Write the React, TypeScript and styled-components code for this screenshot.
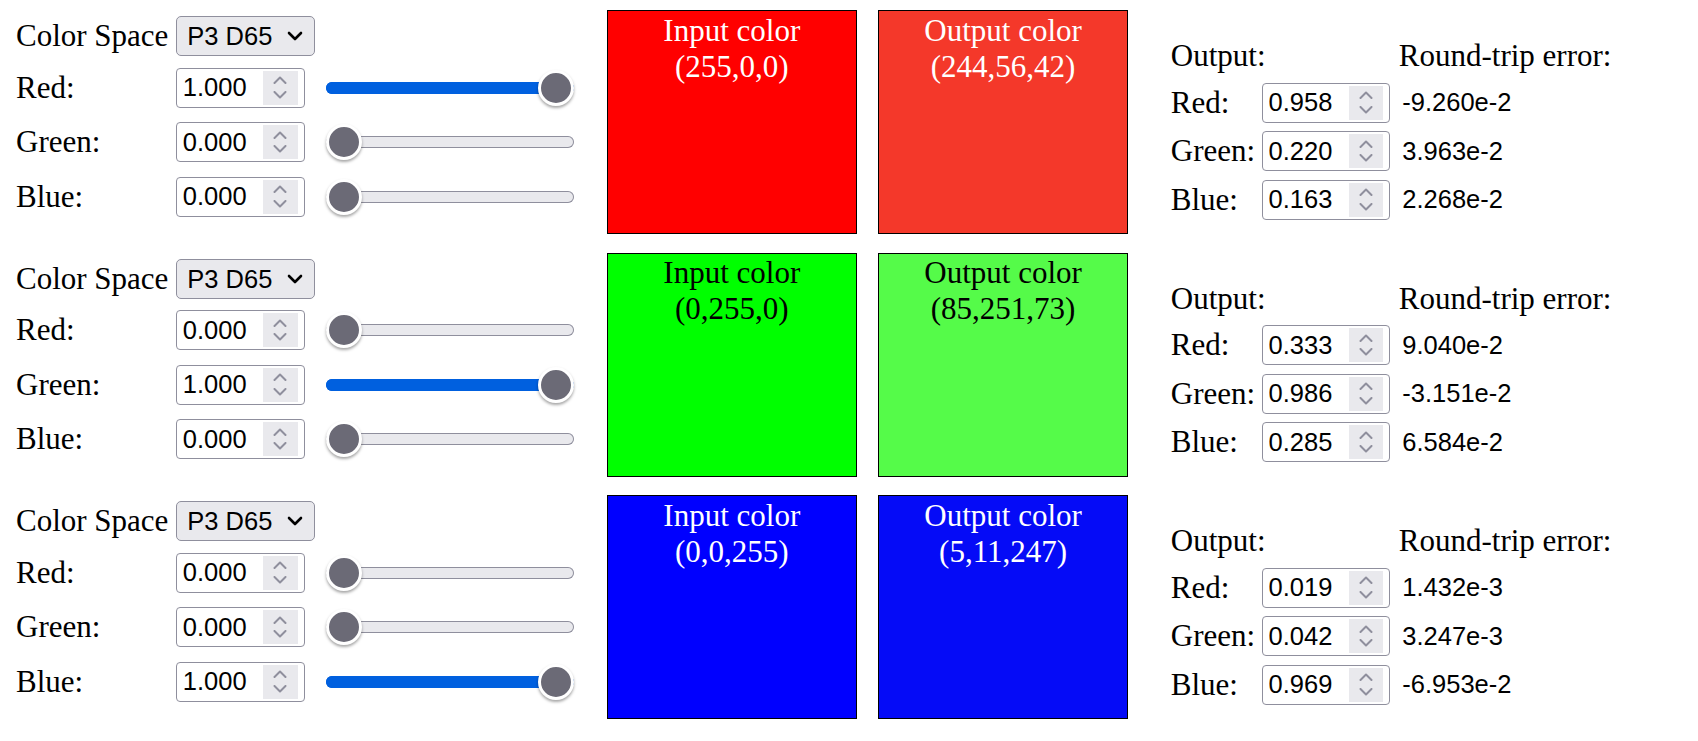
import React from 'react';
import styled, { createGlobalStyle } from 'styled-components';

const GlobalStyle = createGlobalStyle`
  body {
    margin: 0;
    background: #fff;
    color: #000;
    font-family: "Liberation Serif", "Times New Roman", serif;
    font-size: 31px;
  }
`;

const samples = [
    {
        input: [255, 0, 0],
        sliders: [1, 0, 0],
        output: [244, 56, 42],
        outValues: ['0.958', '0.220', '0.163'],
        errors: ['-9.260e-2', '3.963e-2', '2.268e-2'],
        text: '#fff',
    },
    {
        input: [0, 255, 0],
        sliders: [0, 1, 0],
        output: [85, 251, 73],
        outValues: ['0.333', '0.986', '0.285'],
        errors: ['9.040e-2', '-3.151e-2', '6.584e-2'],
        text: '#000',
    },
    {
        input: [0, 0, 255],
        sliders: [0, 0, 1],
        output: [5, 11, 247],
        outValues: ['0.019', '0.042', '0.969'],
        errors: ['1.432e-3', '3.247e-3', '-6.953e-2'],
        text: '#fff',
    },
];

const channels = ['Red:', 'Green:', 'Blue:'];

const Page = styled('div')`
display: flex;
flex-direction: column;
gap: 18.5px;
padding: 10px 0 0 16px;
`

const Section = styled('div')`
display: flex;
align-items: flex-start;
`

const Controls = styled('div')`
display: grid;
grid-template-columns: 160.3px 150px 248px;
grid-template-rows: 40px 46.5px 46.5px 46.5px;
row-gap: 8px;
align-items: center;
margin-top: 6.3px;
`

const Label = styled('div')`
line-height: normal;
white-space: nowrap;
`

const SelectBox = styled('div')`
display: flex;
align-items: center;
box-sizing: border-box;
width: 138.4px;
height: 40px;
padding: 0 11px 0 10px;
border: 1px solid #8f8f9d;
border-radius: 5px;
background: #e9e9ed;
`

const Select = styled('select')`
appearance: none;
-webkit-appearance: none;
flex: 1;
min-width: 0;
border: none;
outline: none;
background: transparent;
padding: 0;
margin: 0;
color: #000;
font-family: "Liberation Sans", Arial, sans-serif;
font-size: 25.5px;
`

const NumberField = styled('div')`
display: flex;
align-items: center;
box-sizing: border-box;
width: 128.4px;
height: 40px;
padding: 0 6px 0 5.5px;
border: 1px solid #8f8f9d;
border-radius: 4px;
background: #fff;
`

const NumberText = styled('input')`
flex: 1;
min-width: 0;
border: none;
outline: none;
padding: 0;
margin: 0;
background: transparent;
color: #000;
font-family: "Liberation Sans", Arial, sans-serif;
font-size: 25.5px;
`

const Spinner = styled('div')`
display: flex;
flex-direction: column;
align-items: center;
justify-content: center;
gap: 6.5px;
width: 34.4px;
height: 34px;
background: #e9e9ed;
`

const Range = styled('input')<{ $pct: number }>`
-webkit-appearance: none;
appearance: none;
width: 248px;
height: 36px;
margin: 0;
padding: 0;
background: transparent;

&::-webkit-slider-runnable-track {
    height: 12px;
    border-radius: 6px;
    background: ${(p) => (p.$pct > 0 ? '#0060df' : '#e9e9ed')};
    box-shadow: inset 0 0 0 1px ${(p) => (p.$pct > 0 ? '#0060df' : '#8f8f9d')};
}

&::-webkit-slider-thumb {
    -webkit-appearance: none;
    box-sizing: border-box;
    width: 36px;
    height: 36px;
    margin-top: -12px;
    border-radius: 50%;
    border: 3px solid #fff;
    background: #6b6a76;
    box-shadow: 0 2px 3px rgba(0, 0, 0, 0.35);
}
`

const Swatches = styled('div')`
display: flex;
gap: 21.3px;
margin-left: 32.5px;
`

const Swatch = styled('div')<{ $bg: string; $fg: string }>`
box-sizing: border-box;
width: 250px;
height: 224px;
padding-top: 1.5px;
border: 1px solid #000;
background: ${(p) => p.$bg};
color: ${(p) => p.$fg};
text-align: center;
line-height: normal;
`

const Results = styled('div')`
display: grid;
grid-template-columns: 91.3px 128.4px auto;
row-gap: 8.5px;
align-items: center;
margin-left: 42.7px;
margin-top: 27.2px;
`

const HeaderCell = styled('div')<{ $span?: number; $offset?: boolean }>`
grid-column: span ${(p) => p.$span || 1};
line-height: 37px;
white-space: nowrap;
margin-left: ${(p) => (p.$offset ? '8.3px' : '0')};
`

const ErrorValue = styled('div')`
margin-left: 8.3px;
padding-left: 3.5px;
font-family: "Liberation Sans", Arial, sans-serif;
font-size: 25.5px;
line-height: normal;
white-space: nowrap;
`

const Chevron = ({ up }: { up?: boolean }) => (
    <svg width="14" height="8" viewBox="0 0 14 8">
        <path
            d={up ? 'M1.5 7 L7 1.5 L12.5 7' : 'M1.5 1 L7 6.5 L12.5 1'}
            fill="none"
            stroke="#8f8f9d"
            strokeWidth="2"
            strokeLinecap="round"
            strokeLinejoin="round"
        />
    </svg>
)

const NumberBox = ({ value }: { value: string }) => (
    <NumberField>
        <NumberText type="text" inputMode="decimal" defaultValue={value} />
        <Spinner>
            <Chevron up />
            <Chevron />
        </Spinner>
    </NumberField>
)

const ColorSpacePicker = () => (
    <SelectBox>
        <Select defaultValue="P3 D65">
            <option>sRGB</option>
            <option>P3 D65</option>
            <option>Rec. 2020</option>
        </Select>
        <svg width="16" height="10" viewBox="0 0 16 10">
            <path d="M2 2 L8 8 L14 2" fill="none" stroke="#000" strokeWidth="2.6" strokeLinecap="round" strokeLinejoin="round" />
        </svg>
    </SelectBox>
)

const rgb = (c: number[]) => `rgb(${c[0]},${c[1]},${c[2]})`

const ConversionRow = ({ sample }: { sample: typeof samples[number] }) => (
    <Section>
        <Controls>
            <Label>Color Space</Label>
            <div>
                <ColorSpacePicker />
            </div>
            <div />
            {channels.map((name, i) => (
                <React.Fragment key={name}>
                    <Label>{name}</Label>
                    <div>
                        <NumberBox value={sample.sliders[i].toFixed(3)} />
                    </div>
                    <Range
                        type="range"
                        min={0}
                        max={1}
                        step={0.001}
                        defaultValue={sample.sliders[i]}
                        $pct={sample.sliders[i] * 100}
                    />
                </React.Fragment>
            ))}
        </Controls>

        <Swatches>
            <Swatch $bg={rgb(sample.input)} $fg={sample.text}>
                Input color
                <br />({sample.input.join(',')})
            </Swatch>
            <Swatch $bg={rgb(sample.output)} $fg={sample.text}>
                Output color
                <br />({sample.output.join(',')})
            </Swatch>
        </Swatches>

        <Results>
            <HeaderCell $span={2}>Output:</HeaderCell>
            <HeaderCell $offset>Round-trip error:</HeaderCell>
            {channels.map((name, i) => (
                <React.Fragment key={name}>
                    <Label>{name}</Label>
                    <NumberBox value={sample.outValues[i]} />
                    <ErrorValue>{sample.errors[i]}</ErrorValue>
                </React.Fragment>
            ))}
        </Results>
    </Section>
)

export default function App() {
    return (
        <>
            <GlobalStyle />
            <Page>
                {samples.map((s, i) => (
                    <ConversionRow key={i} sample={s} />
                ))}
            </Page>
        </>
    )
}
